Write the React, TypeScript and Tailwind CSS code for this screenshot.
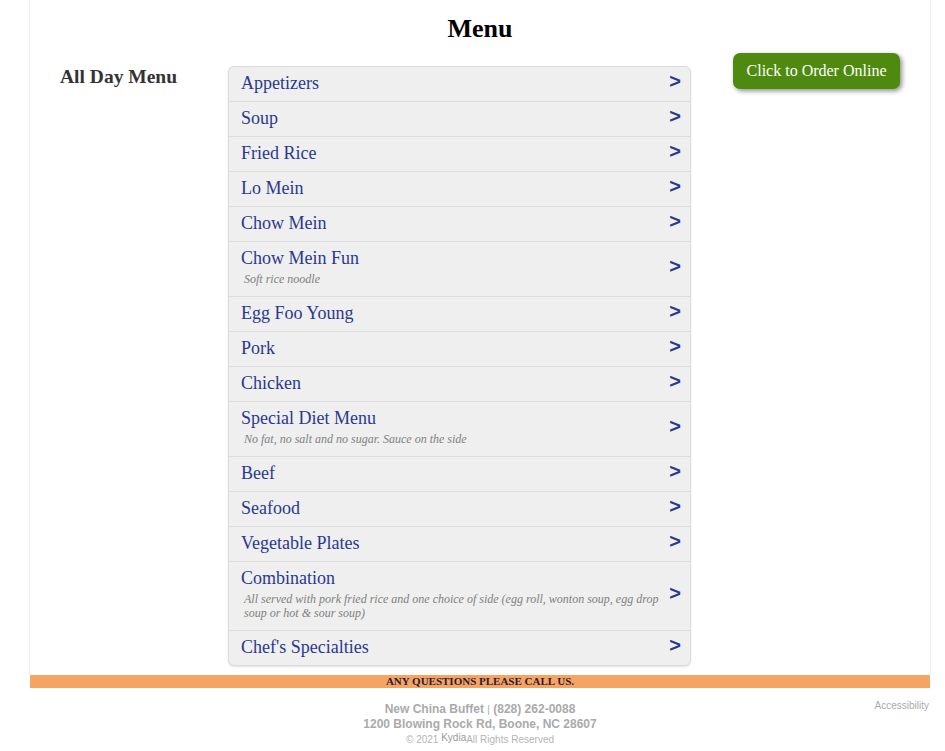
const items: { name: string; desc?: string }[] = [
  { name: "Appetizers" },
  { name: "Soup" },
  { name: "Fried Rice" },
  { name: "Lo Mein" },
  { name: "Chow Mein" },
  { name: "Chow Mein Fun", desc: "Soft rice noodle" },
  { name: "Egg Foo Young" },
  { name: "Pork" },
  { name: "Chicken" },
  { name: "Special Diet Menu", desc: "No fat, no salt and no sugar. Sauce on the side" },
  { name: "Beef" },
  { name: "Seafood" },
  { name: "Vegetable Plates" },
  {
    name: "Combination",
    desc: "All served with pork fried rice and one choice of side (egg roll, wonton soup, egg drop soup or hot & sour soup)",
  },
  { name: "Chef's Specialties" },
];

const serif = "font-['Liberation_Serif','Times_New_Roman',serif]";
const sans = "font-['Liberation_Sans',Arial,sans-serif]";

export default function App() {
  return (
    <div className={`bg-white min-h-[751px] ${serif}`}>
      <div className="ml-[29px] w-[902px] border-x border-[#ececec] pb-[9px]">
        <h1 className="pt-[14px] pb-[9px] text-center text-[26px] leading-[30px] font-bold text-black">
          Menu
        </h1>
        <div className="flex items-start">
          <div className="w-[198px] pl-[30px] pt-[13px] text-[19.5px] leading-[22px] font-bold text-[#333]">
            All Day Menu
          </div>
          <div className="mt-[13px] w-[463px] rounded-[6px] border border-[#dcdcdc] bg-[#efefef] shadow-[0_1px_2px_rgba(0,0,0,0.12)]">
            {items.map((it, i) => (
              <div
                key={it.name}
                className={`flex items-center pl-3 pr-[9px] pt-[6px] pb-[8px] ${
                  i > 0 ? "border-t border-[#dcdcdc]" : ""
                }`}
              >
                <div className="flex-1 pr-[2px]">
                  <div className="text-[18px] leading-[20px] text-[#29398e]">{it.name}</div>
                  {it.desc && (
                    <div className="ml-[3px] pt-[4px] pb-[2px] text-[12px] leading-[14px] italic text-[#808080]">
                      {it.desc}
                    </div>
                  )}
                </div>
                <span className={`${sans} -mt-[4px] text-[20px] leading-[20px] font-bold text-[#29398e]`}>
                  &gt;
                </span>
              </div>
            ))}
          </div>
          <button className="ml-[42px] mt-0 h-[36px] w-[167px] rounded-[7px] bg-[#4e8a0f] text-[16px] text-white shadow-[2px_2px_5px_rgba(0,0,0,0.45)]">
            Click to Order Online
          </button>
        </div>
      </div>
      <div className="ml-[30px] w-[900px] bg-[#f5a462] text-center text-[11px] leading-[13px] font-bold text-[#2b1b3c]">
        ANY QUESTIONS PLEASE CALL US.
      </div>
      <div className={`relative ml-[30px] w-[900px] pt-[14px] text-center text-[#aaa] ${sans}`}>
        <span className="absolute right-[1px] top-[12px] text-[10px] leading-[12px] text-[#aaa]">
          Accessibility
        </span>
        <div className="text-[12px] leading-[14px] font-bold">
          New China Buffet <span className="text-[10px] font-normal">|</span> (828) 262-0088
        </div>
        <div className="text-[12px] leading-[14px] font-bold">1200 Blowing Rock Rd, Boone, NC 28607</div>
        <div className="mt-[2px] text-[10px] leading-[14px] text-[#b4b4b4]">
          © 2021 <span className="relative -top-[2px] text-[#999]">Kydia</span>All Rights Reserved
        </div>
      </div>
    </div>
  );
}
